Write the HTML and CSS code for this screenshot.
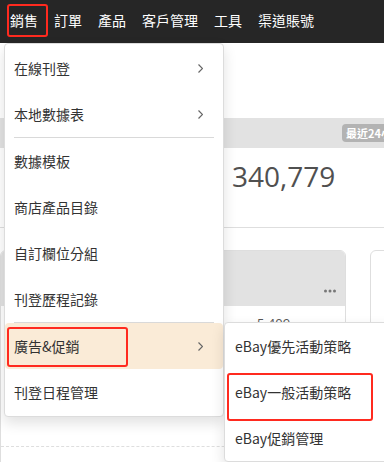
FILE: index.html
```html
<!DOCTYPE html>
<html lang="zh-Hant">
  <head>
    <meta charset="UTF-8" />
    <meta name="viewport" content="width=device-width, initial-scale=1.0" />
    <title>銷售</title>
    <link rel="stylesheet" href="styles.css">
  </head>
  <body>
    <header class="topbar">
      <nav class="nav">
        <a class="nav-item mark">銷售</a>
        <a class="nav-item">訂單</a>
        <a class="nav-item">產品</a>
        <a class="nav-item">客戶管理</a>
        <a class="nav-item">工具</a>
        <a class="nav-item">渠道賬號</a>
      </nav>
    </header>

    <main class="page">
      <!-- Summary -->
      <section class="summary">
        <div class="summary-head">
          <span class="badge">最近24小時</span>
        </div>
        <div class="stats">
          <div class="stat"><span class="stat-num">12,086</span></div>
          <div class="stat"><span class="stat-num">340,779</span></div>
        </div>
      </section>

      <!-- Cards -->
      <section class="cards">
        <div class="card">
          <div class="card-head">
            <svg class="more" width="12" height="4" viewBox="0 0 12 4">
              <circle cx="1.5" cy="2" r="1.5" />
              <circle cx="6" cy="2" r="1.5" />
              <circle cx="10.5" cy="2" r="1.5" />
            </svg>
          </div>
          <div class="card-body">
            <div class="row"><span class="val">5,409</span></div>
            <div class="row"><span class="val">2,316</span></div>
            <div class="row dashed"><span class="val">11,226</span></div>
          </div>
        </div>
        <div class="card blank"></div>
      </section>
    </main>

    <!-- Sales dropdown -->
    <div class="menu">
      <div class="menu-item">在線刊登<svg class="arrow" width="5" height="9" viewBox="0 0 5 9"><polyline points="0.5,0.5 4.5,4.5 0.5,8.5" /></svg></div>
      <div class="menu-item">本地數據表<svg class="arrow" width="5" height="9" viewBox="0 0 5 9"><polyline points="0.5,0.5 4.5,4.5 0.5,8.5" /></svg></div>
      <div class="divider"></div>
      <div class="menu-item">數據模板</div>
      <div class="menu-item">商店產品目錄</div>
      <div class="menu-item">自訂欄位分組</div>
      <div class="menu-item">刊登歷程記錄</div>
      <div class="divider"></div>
      <div class="menu-item open mark">廣告&amp;促銷<svg class="arrow" width="5" height="9" viewBox="0 0 5 9"><polyline points="0.5,0.5 4.5,4.5 0.5,8.5" /></svg>
        <div class="submenu">
          <div class="menu-item">eBay優先活動策略</div>
          <div class="menu-item mark">eBay一般活動策略</div>
          <div class="menu-item">eBay促銷管理</div>
        </div>
      </div>
      <div class="menu-item">刊登日程管理</div>
    </div>
  </body>
</html>
```

FILE: styles.css
```css
:root {
  --mark-color: #ff2a1f;
  --line-color: #dedede;
}
* {
  margin: 0;
  padding: 0;
  box-sizing: border-box;
}

html,
body {
  width: 384px;
  height: 462px;
  overflow: hidden;
  font-family: "Noto Sans CJK TC", "Noto Sans", sans-serif;
  background-color: #fff;
  color: #333;
  position: relative;
}

/* Top navigation */
.topbar {
  background: #262626;
  height: 43px;
}

.nav {
  display: flex;
  height: 100%;
  padding-left: 2px;
}

.nav-item {
  position: relative;
  display: flex;
  align-items: center;
  padding: 0 8px 3px;
  color: #fff;
  font-size: 14px;
}

/* red annotation boxes */
.mark::after {
  content: "";
  position: absolute;
  border: 2px solid var(--mark-color);
  border-radius: 3px;
  pointer-events: none;
}

.nav-item.mark::after {
  left: 5px;
  top: 4px;
  width: 37px;
  height: 29px;
}

/* Background page */
.page {
  width: 420px;
  padding-top: 75px;
}

.summary-head {
  display: flex;
  justify-content: flex-end;
  align-items: center;
  height: 30px;
  background: #e2e2e2;
  padding-right: 13px;
}

.badge {
  background: #b3b3b3;
  color: #fff;
  font-size: 11px;
  font-weight: bold;
  line-height: 18px;
  padding: 0 4px;
  border-radius: 4px;
}

.stats {
  display: flex;
  height: 80px;
  padding: 9px 0 0 12px;
  border-bottom: 1px solid var(--line-color);
}

.stat {
  flex: 0 0 220px;
}

.stat-num {
  font-family: "Open Sans", sans-serif;
  font-size: 28px;
  color: #505050;
}

.cards {
  display: flex;
  gap: 24px;
  margin-top: 22px;
}

.card {
  flex: 0 0 346px;
  height: 240px;
  border: 1px solid var(--line-color);
  border-radius: 6px 6px 0 0;
}

.card.blank {
  flex: 1;
}

.card-head {
  display: flex;
  justify-content: flex-end;
  align-items: flex-end;
  height: 55px;
  background: #e2e2e2;
  border-radius: 5px 5px 0 0;
  padding: 0 9px 13px 0;
}

.more {
  fill: #777;
}

.row {
  height: 70px;
  padding: 8px 0 0 256px;
  font-family: "Open Sans", sans-serif;
  font-size: 13px;
  color: #555;
}

.row.dashed {
  border-top: 1px dashed var(--line-color);
}

/* Dropdown menu */
.menu {
  position: absolute;
  top: 43px;
  left: 4px;
  width: 220px;
  padding: 1px 0;
  background: #fff;
  border: 1px solid #dcdcdc;
  border-radius: 4px;
  box-shadow: 0 6px 14px rgba(0, 0, 0, 0.12);
}

.menu-item {
  position: relative;
  display: flex;
  align-items: center;
  justify-content: space-between;
  height: 46px;
  padding: 0 20px 0 9px;
  font-size: 14px;
  color: #333;
  white-space: nowrap;
}

.arrow {
  fill: none;
  stroke: #666;
  stroke-width: 1.2;
}

.divider {
  height: 1px;
  margin: 0 9px;
  background: #d9d9d9;
}

.menu-item.open {
  background: #faebd7;
  border-radius: 4px;
}

.menu-item.open.mark::after {
  left: 2px;
  top: 4px;
  width: 117px;
  bottom: 2px;
}

.submenu {
  position: absolute;
  top: -1px;
  left: calc(100% + 1px);
  width: 170px;
  background: #fff;
  border: 1px solid #dcdcdc;
  border-radius: 4px;
  box-shadow: 0 6px 14px rgba(0, 0, 0, 0.12);
}

.submenu .menu-item {
  padding-left: 10px;
}

.submenu .menu-item.mark::after {
  left: 2px;
  top: 4px;
  width: 142px;
  height: 44px;
}
```
